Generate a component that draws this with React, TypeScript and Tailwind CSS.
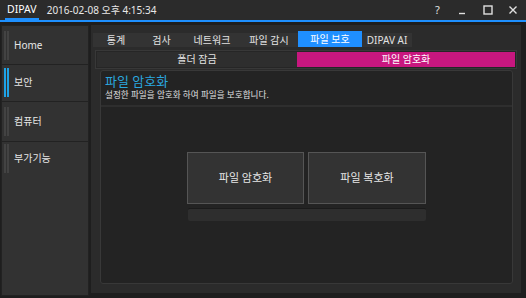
import type { ReactNode } from 'react'

const FONT = { fontFamily: '"Noto Sans", "Noto Sans CJK KR", sans-serif' }

const TABS = [
  { label: '통계', w: 'w-[46px]' },
  { label: '검사', w: 'w-[45px]' },
  { label: '네트워크', w: 'w-[56px]' },
  { label: '파일 감시', w: 'w-[58px]' },
  { label: '파일 보호', w: 'w-[64px]', active: true },
  { label: 'DIPAV AI', w: 'w-[50px]' },
]

function SideItem({ label, active, className }: { label: string; active?: boolean; className: string }) {
  const bar = active ? 'bg-[#1ea3e6]' : 'bg-[#434343]'
  return (
    <div className={`flex items-start pl-[2px] bg-[#323232] ${className}`}>
      <div className="flex h-[29px] gap-px">
        <div className={`w-[2px] h-full ${bar}`} />
        <div className={`w-[2px] h-full ${bar}`} />
      </div>
      <div className="flex h-[29px] items-center pl-[5px] text-[10px] text-[#e6e6e6]">{label}</div>
    </div>
  )
}

function WinButton({ children }: { children: ReactNode }) {
  return <div className="flex w-[25px] h-full items-center justify-center text-[#e0e0e0]">{children}</div>
}

export default function App() {
  return (
    <div className="flex h-[298px] w-[526px] flex-col overflow-hidden bg-[#1e1e1e]" style={FONT}>
      {/* title bar */}
      <div className="flex h-[20px] items-center bg-[#2b2b2b]">
        <div className="ml-[5px] flex h-full items-center border-b-2 border-[#1e90ff] px-[2px] pt-[2px] text-[10.5px] text-white">
          DIPAV
        </div>
        <div className="ml-[8px] pt-[1px] text-[10px] text-[#e8e8e8]">2016-02-08 오후 4:15:34</div>
        <div className="ml-auto mr-px flex h-full items-center">
          <WinButton>
            <span className="text-[11px]">?</span>
          </WinButton>
          <WinButton>
            <svg width="9" height="9" viewBox="0 0 9 9">
              <path d="M1 7.5h6" stroke="currentColor" strokeWidth="1.4" />
            </svg>
          </WinButton>
          <WinButton>
            <svg width="10" height="10" viewBox="0 0 10 10">
              <rect x="1" y="1" width="8" height="8" fill="none" stroke="currentColor" strokeWidth="1.4" />
            </svg>
          </WinButton>
          <WinButton>
            <svg width="10" height="10" viewBox="0 0 10 10">
              <path d="M1.5 1.5l7 7M8.5 1.5l-7 7" stroke="currentColor" strokeWidth="1.4" />
            </svg>
          </WinButton>
        </div>
      </div>
      <div className="h-[2px] bg-[#1e90ff]" />

      {/* body */}
      <div className="flex flex-1 pt-[3px] pb-[2px]">
        {/* sidebar */}
        <div className="ml-px flex w-[88px] flex-col gap-px border border-[#222] bg-[#222]">
          <SideItem label="Home" className="h-[38px] pt-[5px]" />
          <SideItem label="보안" active className="h-[36px] pt-[3px]" />
          <SideItem label="컴퓨터" className="h-[39px] pt-[5px]" />
          <SideItem label="부가기능" className="flex-1 pt-[2px]" />
        </div>

        {/* content */}
        <div className="mb-[3px] ml-[2px] flex w-[430px] flex-col bg-[#2b2b2b] pl-[2px] pr-[4px] pt-[6px]">
          <div className="flex h-[16px] items-end">
            {TABS.map((t) => (
              <div
                key={t.label}
                className={`flex items-center justify-center text-[10px] ${t.w} ${
                  t.active ? 'h-[16px] bg-[#1f8fff] text-white' : 'h-[14px] bg-[#333] text-[#e2e2e2]'
                }`}
              >
                {t.label}
              </div>
            ))}
          </div>

          <div className="ml-[2px] mt-[3px] flex h-[19px] items-stretch border border-[#383838] bg-[#262626] p-px">
            <div className="flex w-[200px] items-center justify-center bg-[#2e2e2e] text-[10px] text-[#e2e2e2]">
              폴더 잠금
            </div>
            <div className="flex w-[218px] items-center justify-center bg-[#c8177f] text-[10px] text-white">
              파일 암호화
            </div>
          </div>

          <div className="ml-[7px] mr-[4px] mt-[1px] mb-[9px] flex flex-1 flex-col rounded-[3px] border border-[#383838] bg-[#232323]">
            <div className="flex flex-col border-b-2 border-[#2e2e2e] pl-[4px] pb-[4px] pt-[1px]">
              <div className="text-[13px] leading-[18px] text-[#2aa6df]">파일 암호화</div>
              <div className="text-[8.6px] leading-[11px] text-[#e0e0e0]">설정한 파일을 암호화 하여 파일을 보호합니다.</div>
            </div>
            <div className="flex flex-col items-center pt-[45px]">
              <div className="flex gap-[4px]">
                <div className="flex h-[52px] w-[117px] items-center justify-center border border-[#555] bg-[#333] text-[11px] text-[#e6e6e6]">
                  파일 암호화
                </div>
                <div className="flex h-[52px] w-[118px] items-center justify-center border border-[#555] bg-[#333] text-[11px] text-[#e6e6e6]">
                  파일 복호화
                </div>
              </div>
              <div className="mt-[4px] h-[13px] w-[238px] rounded-[2px] border-t border-[#1b1b1b] bg-[#2e2e2e]" />
            </div>
          </div>
        </div>
      </div>
    </div>
  )
}
